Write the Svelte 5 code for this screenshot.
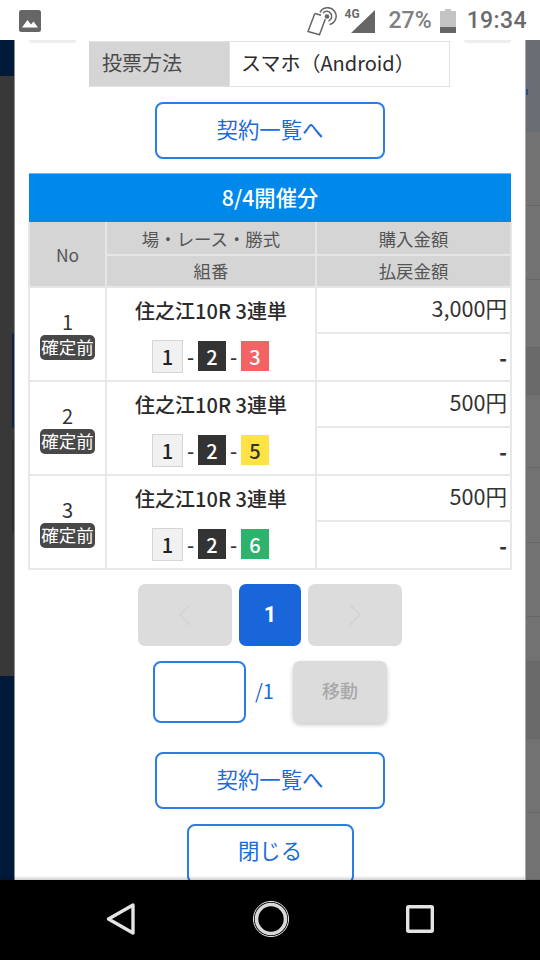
<script>
  const rows = [
    { no: 1, third: 3, tone: "red", amount: "3,000円" },
    { no: 2, third: 5, tone: "yellow", amount: "500円" },
    { no: 3, third: 6, tone: "green", amount: "500円" }
  ];
  // the page behind the modal, as seen on its right edge
  const rightBands = [
    { h: 92, cls: "blueish" },
    { h: 74, cls: "" },
    { h: 74, cls: "" },
    { h: 68, cls: "" },
    { h: 47, cls: "darker" },
    { h: 73, cls: "" },
    { h: 75, cls: "" },
    { h: 74, cls: "" },
    { h: 45, cls: "" },
    { h: 77, cls: "darker" },
    { h: 74, cls: "" },
    { h: 67, cls: "" }
  ];
</script>

<div class="screen">
  <header class="status">
    <svg class="pic" width="22" height="22" viewBox="0 0 22 22">
      <rect width="22" height="22" rx="2.5" fill="#666" />
      <path d="M3 17.500 8.500 10l3.500 4.500 2.500-3 4.500 6z" fill="#fff" />
    </svg>
    <div class="status-right">
      <svg class="nfc" width="30" height="29" viewBox="0 0 30 29" fill="none" stroke="#666">
        <path d="M8 6.500 14 8.300 M18.300 12 12.500 27.800 1 24.500 7.800 6.500" stroke-width="1.500" stroke-linejoin="round" />
        <path d="M13 5.500a8.500 8.500 0 1 1 9.500 12" stroke-width="1.500" />
        <path d="M16 6a5 5 0 1 1 5.500 8" stroke-width="1.500" />
        <circle cx="20" cy="9.500" r="2.300" fill="#666" stroke="none" />
      </svg>
      <span class="net">4G</span>
      <svg class="signal" width="24" height="23" viewBox="0 0 24 23"><path d="M0 23 24 0v23z" fill="#666" /></svg>
      <span class="pct">27%</span>
      <svg class="batt" width="16" height="24" viewBox="0 0 16 24">
        <path d="M5 0h6v2h5v22H0V2h5z" fill="#c4c4c4" />
        <rect y="18" width="16" height="6" fill="#666" />
      </svg>
      <span class="time">19:34</span>
    </div>
  </header>

  <div class="middle">
    <div class="side left">
      <div class="navy top"></div>
      <div class="dim">
        <span class="ghost blue"></span>
        <span class="ghost"></span>
      </div>
      <div class="navy bottom"></div>
    </div>

    <main class="modal">
      <div class="stubs">
        <span class="stub"></span>
        <span class="stub"></span>
      </div>

      <div class="info">
        <div class="info-label">投票方法</div>
        <div class="info-value">スマホ（Android）</div>
      </div>

      <button class="outline wide first">契約一覧へ</button>

      <h2 class="date">8/4開催分</h2>
      <table>
        <colgroup>
          <col class="c1" />
          <col class="c2" />
          <col class="c3" />
        </colgroup>
        <thead>
          <tr>
            <th rowspan="2">No</th>
            <th>場・レース・勝式</th>
            <th>購入金額</th>
          </tr>
          <tr>
            <th>組番</th>
            <th>払戻金額</th>
          </tr>
        </thead>
        <tbody>
          {#each rows as row}
            <tr class="upper">
              <td rowspan="2" class="no">
                <div class="num">{row.no}</div>
                <div class="tag">確定前</div>
              </td>
              <td rowspan="2" class="race">
                <div class="race-name">住之江10R 3連単</div>
                <div class="combo">
                  <span class="boat one">1</span>
                  <span class="dash">-</span>
                  <span class="boat black">2</span>
                  <span class="dash">-</span>
                  <span class="boat {row.tone}">{row.third}</span>
                </div>
              </td>
              <td class="money">{row.amount}</td>
            </tr>
            <tr class="lower">
              <td class="money refund">-</td>
            </tr>
          {/each}
        </tbody>
      </table>

      <div class="pager">
        <div class="page arrow">
          <svg width="14" height="22" viewBox="0 0 14 22" fill="none" stroke="#d2d2d2" stroke-width="1.500"><path d="M12 1 2 11l10 10" /></svg>
        </div>
        <div class="page current">1</div>
        <div class="page arrow">
          <svg width="14" height="22" viewBox="0 0 14 22" fill="none" stroke="#d2d2d2" stroke-width="1.500"><path d="M2 1l10 10L2 21" /></svg>
        </div>
      </div>

      <div class="goto">
        <input class="goto-input" type="text" aria-label="ページ" />
        <span class="total">/1</span>
        <button class="move">移動</button>
      </div>

      <button class="outline wide second">契約一覧へ</button>
      <button class="outline close">閉じる</button>
    </main>

    <div class="side right">
      {#each rightBands as band}
        <div class="band {band.cls}" style={`height: ${band.h}px`}></div>
      {/each}
      <span class="nub"></span>
    </div>
  </div>

  <nav class="softkeys">
    <svg width="30" height="34" viewBox="0 0 30 34" fill="none" stroke="#e4e4e4" stroke-width="3.400" stroke-linejoin="round"><path d="M27 3v28L2.500 17z" /></svg>
    <svg width="38" height="38" viewBox="0 0 38 38" fill="none"><circle cx="19" cy="19" r="17.600" stroke="#e8e8e8" stroke-width="1" /><circle cx="19" cy="19" r="14.500" stroke="#d8d8d8" stroke-width="3.600" /></svg>
    <svg width="28" height="28" viewBox="0 0 28 28" fill="none" stroke="#e4e4e4" stroke-width="3.400" stroke-linejoin="round"><rect x="1.700" y="1.700" width="24.600" height="24.600" rx="1" /></svg>
  </nav>
</div>

<style>
  :global(body) {
    margin: 0;
    font-family: "Noto Sans CJK JP", "Noto Sans", sans-serif;
  }
  .screen {
    width: 540px;
    height: 960px;
    display: flex;
    flex-direction: column;
    overflow: hidden;
    background: #fff;
  }

  .status {
    height: 40px;
    flex: none;
    display: flex;
    align-items: center;
    justify-content: space-between;
    padding: 0 13px 0 19px;
    background: #fff;
    font-family: Roboto, sans-serif;
    color: #6a6a6a;
  }
  .pic {
    margin-top: 1px;
  }
  .status-right {
    display: flex;
    align-items: center;
    height: 40px;
  }
  .nfc {
    margin-top: 3px;
  }
  .net {
    font-size: 12px;
    font-weight: 700;
    align-self: flex-start;
    margin: 7px 0 0 8px;
    line-height: 14px;
    width: 15px;
    white-space: nowrap;
  }
  .signal {
    margin: 3px 0 0 -9px;
  }
  .pct {
    font-size: 23px;
    margin-left: 14px;
    font-weight: 500;
    color: #808080;
  }
  .batt {
    margin: 1px 0 0 8px;
  }
  .time {
    font-size: 23px;
    font-weight: 500;
    margin-left: 11px;
    letter-spacing: 0.4px;
  }

  .middle {
    flex: 1;
    min-height: 0;
    display: flex;
  }
  .side {
    width: 15px;
    flex: none;
    display: flex;
    flex-direction: column;
    overflow: hidden;
  }
  .left {
    border-right: 1px solid #8a8f96;
    box-sizing: border-box;
  }
  .navy {
    background: #021a3a;
    flex: none;
  }
  .navy.top {
    height: 36px;
  }
  .navy.bottom {
    flex: 1;
  }
  .dim {
    height: 600px;
    flex: none;
    background: #383838;
    display: flex;
    flex-direction: column;
    align-items: flex-end;
    padding-top: 257px;
    box-sizing: border-box;
    gap: 11px;
  }
  .ghost {
    width: 2px;
    height: 94px;
    flex: none;
    border-radius: 3px 0 0 3px;
    background: #2c2c2c;
  }
  .ghost.blue {
    height: 95px;
    background: #0d2244;
  }
  .right {
    position: relative;
    background: #727272;
    border-left: 1px solid #a8a8a8;
    box-sizing: border-box;
  }
  .band {
    flex: none;
    border-bottom: 1px solid #666;
    box-sizing: border-box;
  }
  .blueish {
    background: #6a6e74;
    border-bottom: 0;
  }
  .darker {
    background: #6a6a6a;
  }
  .nub {
    position: absolute;
    left: 0;
    top: 49px;
    width: 2px;
    height: 6px;
    background: #2c4c86;
  }

  .modal {
    width: 510px;
    flex: none;
    background: #fff;
    padding: 0 14px;
    box-sizing: border-box;
    display: flex;
    flex-direction: column;
    align-items: center;
    overflow: hidden;
  }
  .modal > * {
    flex: none;
  }
  .stubs {
    align-self: stretch;
    display: flex;
    justify-content: space-between;
    height: 3px;
    margin-bottom: -2px;
  }
  .stub {
    width: 47px;
    height: 3px;
    background: #eeeeee;
    border-radius: 0 0 7px 7px;
  }

  .info {
    width: 361px;
    height: 46px;
    margin-right: 1px;
    display: flex;
    font-size: 20px;
    border: 1px solid #e2e2e2;
    border-width: 1px 1px 1px 0;
    box-sizing: border-box;
  }
  .info-label {
    width: 140px;
    background: #d5d5d5;
    color: #4a4a4a;
    padding-left: 13px;
    box-sizing: border-box;
    line-height: 42px;
  }
  .info-value {
    flex: 1;
    padding-left: 11px;
    line-height: 42px;
    border-left: 1px solid #e2e2e2;
    white-space: nowrap;
    color: #2c2c2c;
  }

  button {
    font-family: inherit;
    padding: 0;
    cursor: pointer;
  }
  .outline {
    display: block;
    background: #fff;
    color: #1a6bdc;
    border: 2px solid #2b7de6;
    border-radius: 8px;
    font-size: 21.400px;
    height: 57px;
    padding-bottom: 4px;
    box-sizing: border-box;
  }
  .wide {
    width: 230px;
  }
  .first {
    margin-top: 15px;
  }
  .second {
    margin-top: 29px;
  }
  .close {
    width: 167px;
    margin-top: 15px;
    height: 60px;
    padding-bottom: 8px;
  }

  .date {
    align-self: stretch;
    margin: 14px 0 0;
    height: 49px;
    background: #0088ea;
    color: #fff;
    border-top: 1px solid #6db9f0;
    box-sizing: border-box;
    font-size: 21.300px;
    font-weight: 500;
    text-align: center;
    line-height: 45px;
  }

  table {
    width: 482px;
    border-collapse: collapse;
    table-layout: fixed;
  }
  .c1 {
    width: 77px;
  }
  .c2 {
    width: 210px;
  }
  .c3 {
    width: 195px;
  }
  th {
    background: #d5d5d5;
    border: 2px solid #e6e6e6;
    border-top: 0;
    color: #555;
    font-size: 17.400px;
    font-weight: 400;
    height: 32px;
    padding: 0;
    box-sizing: border-box;
  }
  thead tr:first-child th {
    border-top: 1px solid #d5d5d5;
  }
  td {
    border: 2px solid #e8e8e8;
    padding: 0;
    color: #222;
    box-sizing: border-box;
  }
  .upper {
    height: 46px;
  }
  .lower {
    height: 48px;
  }
  .no {
    text-align: center;
    vertical-align: middle;
    padding-top: 2px;
  }
  .num {
    font-size: 20px;
    line-height: 24px;
    color: #333;
  }
  .tag {
    width: 55px;
    height: 25px;
    margin: 1px auto 0;
    background: #484848;
    color: #fff;
    border-radius: 5px;
    font-size: 17.500px;
    line-height: 24px;
    white-space: nowrap;
  }
  .race {
    text-align: center;
    vertical-align: top;
  }
  .race-name {
    font-size: 20px;
    font-weight: 500;
    line-height: 26px;
    margin-top: 10px;
    color: #2a2a2a;
  }
  .combo {
    margin-top: 16px;
    display: flex;
    justify-content: center;
    align-items: center;
    gap: 4px;
    padding-right: 1px;
  }
  .boat {
    width: 28px;
    height: 30px;
    display: flex;
    align-items: center;
    justify-content: center;
    font-size: 20px;
    font-weight: 500;
  }
  .dash {
    font-size: 20px;
    font-weight: 500;
    color: #333;
    width: 7px;
    text-align: center;
  }
  .one {
    width: 31px;
    height: 33px;
    background: #f1f1f1;
    border: 1.500px solid #d5d5d5;
    box-sizing: border-box;
    color: #222;
  }
  .black {
    background: #333;
    color: #fff;
  }
  .red {
    background: #f46363;
    color: #fff;
  }
  .yellow {
    background: #ffe244;
    color: #333;
  }
  .green {
    background: #2eb36d;
    color: #fff;
  }
  .money {
    text-align: right;
    padding-right: 3px;
    font-size: 21.600px;
    vertical-align: top;
    line-height: 40px;
    color: #333;
  }
  .refund {
    font-size: 20px;
    font-weight: 900;
    line-height: 44px;
    padding-top: 2px;
  }

  .pager {
    display: flex;
    gap: 7px;
    margin-top: 14px;
  }
  .page {
    height: 62px;
    border-radius: 7px;
    display: flex;
    align-items: center;
    justify-content: center;
  }
  .arrow {
    width: 94px;
    background: #dcdcdc;
  }
  .current {
    width: 62px;
    background: #1866da;
    color: #fff;
    font-family: Roboto, sans-serif;
    font-size: 22px;
    font-weight: 700;
  }

  .goto {
    display: flex;
    align-items: center;
    margin-top: 15px;
    height: 62px;
  }
  .goto-input {
    width: 93px;
    height: 62px;
    box-sizing: border-box;
    border: 2px solid #2b7de6;
    border-radius: 8px;
    background: #fff;
    padding: 0;
    margin: 0;
  }
  .total {
    width: 47px;
    padding: 0 0 3px 9px;
    box-sizing: border-box;
    font-size: 20px;
    color: #1a6bdc;
  }
  .move {
    width: 94px;
    height: 62px;
    border: 0;
    border-radius: 7px;
    background: #dcdcdc;
    color: #a8a8a8;
    font-size: 18px;
    font-weight: 500;
    padding-bottom: 4px;
    box-shadow: 0 2px 4px rgba(0, 0, 0, 0.22);
  }

  .softkeys {
    height: 80px;
    flex: none;
    background: #000;
    display: flex;
    align-items: center;
    justify-content: center;
    gap: 116px;
    padding-bottom: 2px;
    box-sizing: border-box;
    box-shadow: 0 -2px 3px rgba(0, 0, 0, 0.2);
  }
</style>
